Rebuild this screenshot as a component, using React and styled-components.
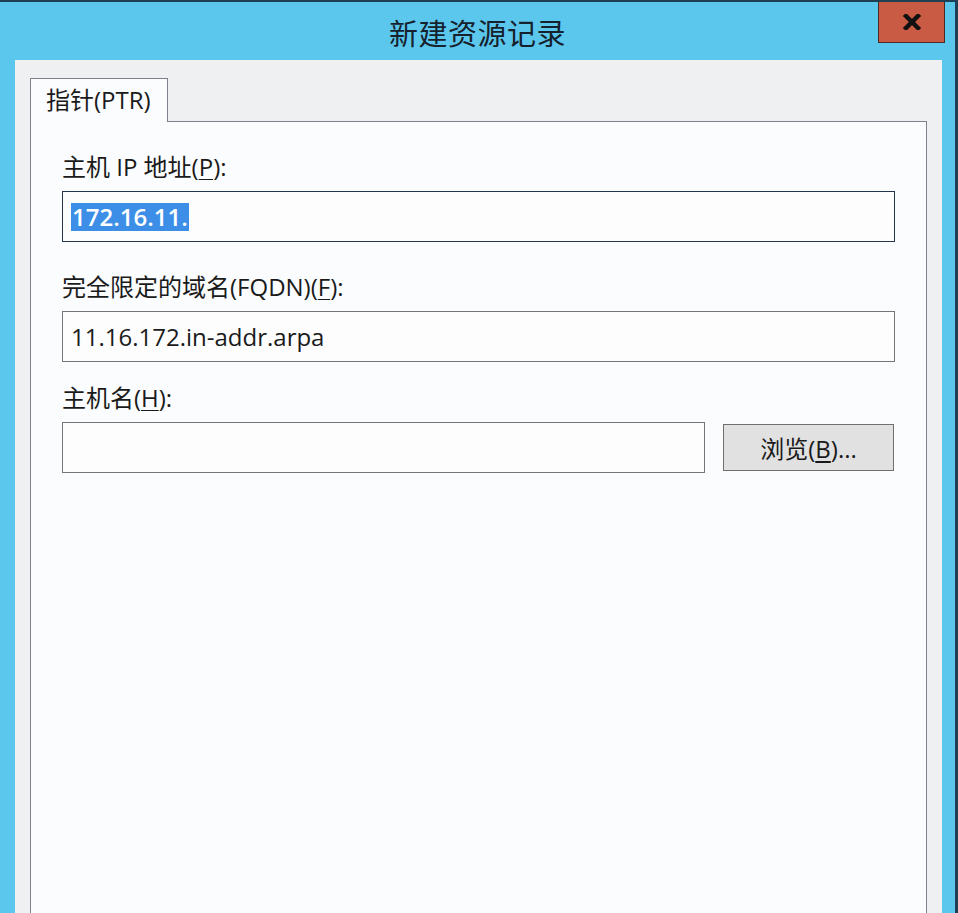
import React from "react";
import styled, { createGlobalStyle } from "styled-components";

const GlobalStyles = createGlobalStyle`
  html, body {
    margin: 0;
    padding: 0;
    height: 100%;
    overflow: hidden;
  }
  #root {
    height: 100%;
  }
  body {
    font-family: "Open Sans", "Noto Sans CJK SC", sans-serif;
    color: #1a1a1a;
  }
`;

const Window = styled.div`
  height: 100vh;
  box-sizing: border-box;
  display: flex;
  flex-direction: column;
  background: #5cc7ed;
  border-top: 2px solid #1f3f55;
  border-right: 3px solid #1f3f55;
`;

const TitleBar = styled.div`
  height: 58px;
  flex: none;
  display: grid;
  grid-template-columns: 1fr auto 1fr;
  align-items: center;
`;

const Title = styled.div`
  grid-column: 2;
  font-family: "Noto Sans CJK SC", sans-serif;
  font-size: 29px;
  color: #15212c;
  letter-spacing: 0.5px;
  padding-top: 2px;
`;

const CloseButton = styled.button`
  grid-column: 3;
  justify-self: end;
  align-self: start;
  margin: 0 10px 0 0;
  width: 67px;
  height: 41px;
  padding: 0;
  display: flex;
  align-items: center;
  justify-content: center;
  background: #c95a44;
  border: 1px solid #4a2a22;
  border-top: none;
`;

const Client = styled.div`
  flex: 1;
  margin: 0 13px 0 15px;
  padding: 18px 15px 0;
  background: #eff0f2;
  display: flex;
  flex-direction: column;
  min-height: 0;
`;

const TabRow = styled.div`
  display: flex;
  align-items: flex-end;
`;

const Tab = styled.div`
  width: 138px;
  height: 44px;
  box-sizing: border-box;
  padding: 5px 0 0 15px;
  background: #fbfcfe;
  border: 1px solid #7d818c;
  border-bottom: none;
  font-size: 24px;
  line-height: 32px;
`;

const TabLine = styled.div`
  flex: 1;
  border-bottom: 1px solid #7d818c;
`;

const Panel = styled.div`
  flex: 1;
  background: #fbfcfe;
  border-left: 1px solid #7d818c;
  border-right: 1px solid #7d818c;
  padding: 33px 31px 0;
  display: flex;
  flex-direction: column;
`;

const Label = styled.div`
  font-size: 24px;
  line-height: 24px;
  margin-top: ${(p) => p.$gap || 0}px;
  white-space: nowrap;

  u {
    text-underline-offset: 3px;
    text-decoration-thickness: 1px;
  }
`;

const Row = styled.div`
  display: flex;
  align-items: center;
  gap: 18px;
  margin-top: 12px;
`;

const TextBox = styled.div`
  flex: ${(p) => (p.$wide ? 1 : "none")};
  width: ${(p) => (p.$wide ? "auto" : "643px")};
  height: 51px;
  box-sizing: border-box;
  border: 1px solid ${(p) => (p.$focused ? "#22354c" : "#767676")};
  background: #fdfdfd;
  padding: 0 8px;
  display: flex;
  align-items: center;
  font-size: 24px;
  white-space: nowrap;
`;

const Selected = styled.span`
  background: #3d8ee6;
  color: #ffffff;
  font-weight: 600;
  line-height: 28px;
  padding: 0 1px;
`;

const Browse = styled.button`
  width: 171px;
  height: 47px;
  box-sizing: border-box;
  background: #e1e1e1;
  border: 1px solid #707070;
  font-family: "Open Sans", "Noto Sans CJK SC", sans-serif;
  font-size: 24px;
  color: #1a1a1a;
  padding: 0;

  u {
    text-underline-offset: 3px;
  }
`;

function CloseGlyph() {
  return (
    <svg width="20" height="16" viewBox="0 0 20 16">
      <path
        d="M4 2 L16 14 M16 2 L4 14"
        stroke="#111"
        strokeWidth="4.5"
        strokeLinecap="square"
      />
    </svg>
  );
}

export default function App() {
  return (
    <>
      <GlobalStyles />
      <Window>
        <TitleBar>
          <Title>新建资源记录</Title>
          <CloseButton aria-label="关闭">
            <CloseGlyph />
          </CloseButton>
        </TitleBar>
        <Client>
          <TabRow>
            <Tab>指针(PTR)</Tab>
            <TabLine />
          </TabRow>
          <Panel>
            <Label>
              主机 IP 地址(<u>P</u>):
            </Label>
            <Row>
              <TextBox $wide $focused>
                <Selected>172.16.11.</Selected>
              </TextBox>
            </Row>

            <Label $gap={33}>
              完全限定的域名(FQDN)(<u>F</u>):
            </Label>
            <Row>
              <TextBox $wide>11.16.172.in-addr.arpa</TextBox>
            </Row>

            <Label $gap={24}>
              主机名(<u>H</u>):
            </Label>
            <Row>
              <TextBox />
              <Browse>
                浏览(<u>B</u>)...
              </Browse>
            </Row>
          </Panel>
        </Client>
      </Window>
    </>
  );
}
